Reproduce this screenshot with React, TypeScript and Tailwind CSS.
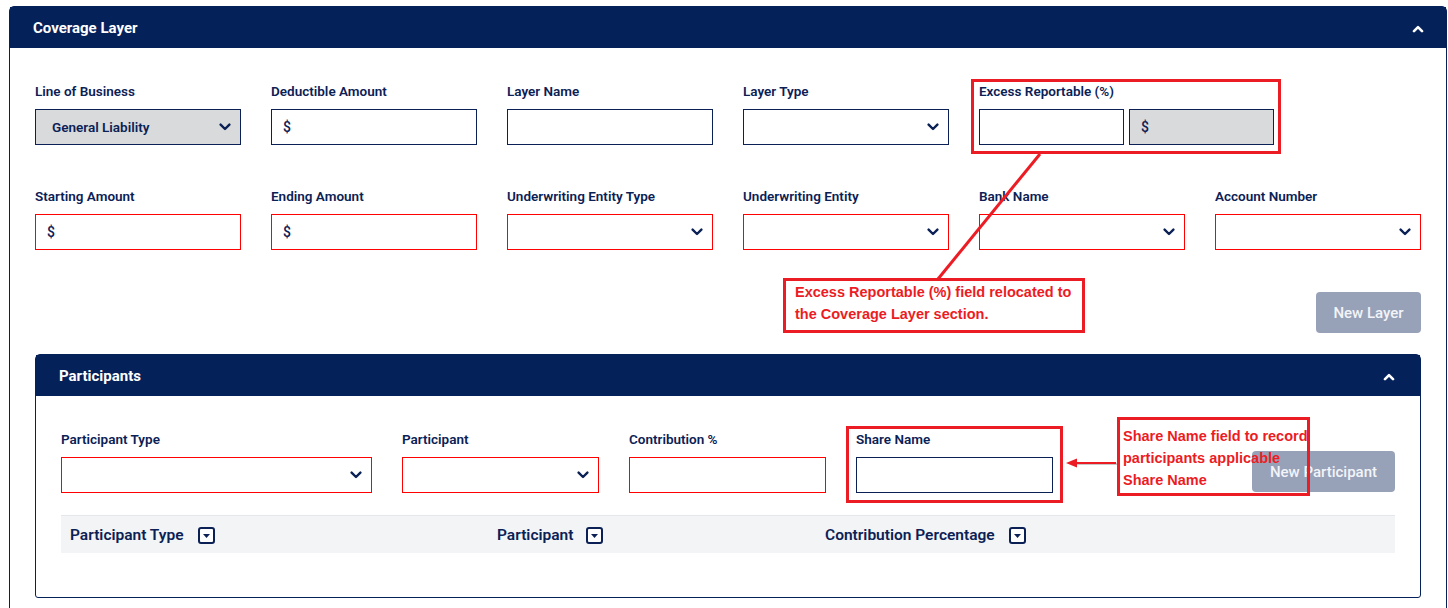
import React from 'react';

function ChevronUp() {
  return (
    <svg width="12" height="8" viewBox="0 0 12 8">
      <path d="M2 6.2 6 2.2l4 4" fill="none" stroke="#ffffff" strokeWidth="2.6" strokeLinecap="round" strokeLinejoin="round" />
    </svg>
  );
}

function ChevronDown() {
  return (
    <svg width="12" height="8" viewBox="0 0 12 8" className="absolute right-[9px] top-1/2 -translate-y-1/2">
      <path d="M1.6 1.6 6 6l4.4-4.4" fill="none" stroke="#0b2155" strokeWidth="2.4" strokeLinecap="round" strokeLinejoin="round" />
    </svg>
  );
}

function FilterIcon() {
  return (
    <svg width="17" height="17" viewBox="0 0 17 17" className="shrink-0">
      <rect x="1" y="1" width="15" height="15" rx="2" fill="#ffffff" stroke="#0b2155" strokeWidth="2" />
      <path d="M5 7h7l-3.5 4z" fill="#0b2155" />
    </svg>
  );
}

type FieldProps = {
  label: string;
  width: string;
  select?: boolean;
  red?: boolean;
  gray?: boolean;
  text?: string;
};

function Box({ width, select, red, gray, text }: Omit<FieldProps, 'label'>) {
  return (
    <div
      className={`relative flex h-[36px] items-center border ${width} ${red ? 'border-[#ff0000]' : 'border-[#0b2155]'} ${gray ? 'bg-[#d9dadc]' : 'bg-white'} ${select ? 'pl-[16px]' : 'pl-[11px]'}`}
    >
      {text && (
        <span className={`text-[#0b2155] ${select ? 'text-[13.5px] font-semibold' : 'text-[14px] font-medium'}`}>{text}</span>
      )}
      {select && <ChevronDown />}
    </div>
  );
}

function Field({ label, ...rest }: FieldProps) {
  return (
    <div className="flex flex-col">
      <label className="mb-[8px] h-[19px] text-[13.5px] font-semibold leading-[19px] text-[#0b2155]">{label}</label>
      <Box {...rest} />
    </div>
  );
}

export default function App() {
  return (
    <div className="relative min-h-[608px] overflow-hidden bg-white pl-[9px] pr-[1px] pt-[6px] font-['Roboto',sans-serif]">
      <div className="rounded-t-[5px] border border-[#05215a]">
        <div className="flex h-[41px] items-center justify-between bg-[#05215a] pl-[23px] pr-[22px] pt-[2px]">
          <h2 className="text-[15px] font-bold text-white">Coverage Layer</h2>
          <ChevronUp />
        </div>

        <div className="px-[25px] pb-[20px] pt-[34px]">
          <div className="flex gap-[30px]">
            <Field label="Line of Business" width="w-[206px]" select gray text="General Liability" />
            <Field label="Deductible Amount" width="w-[206px]" text="$" />
            <Field label="Layer Name" width="w-[206px]" />
            <Field label="Layer Type" width="w-[206px]" select />
            <div className="flex flex-col">
              <label className="mb-[8px] h-[19px] text-[13.5px] font-semibold leading-[19px] text-[#0b2155]">Excess Reportable (%)</label>
              <div className="flex gap-[5px]">
                <Box width="w-[145px]" />
                <Box width="w-[145px]" gray text="$" />
              </div>
            </div>
          </div>

          <div className="mt-[42px] flex gap-[30px]">
            <Field label="Starting Amount" width="w-[206px]" red text="$" />
            <Field label="Ending Amount" width="w-[206px]" red text="$" />
            <Field label="Underwriting Entity Type" width="w-[206px]" red select />
            <Field label="Underwriting Entity" width="w-[206px]" red select />
            <Field label="Bank Name" width="w-[206px]" red select />
            <Field label="Account Number" width="w-[206px]" red select />
          </div>

          <div className="mt-[42px] flex justify-end">
            <button className="h-[41px] w-[105px] rounded-[4px] bg-[#97a1b8] pt-[2px] text-[15px] font-medium text-[#f2f4f8]">New Layer</button>
          </div>

          <div className="mt-[21px] rounded-t-[5px] rounded-b-[3px] border border-[#05215a]">
            <div className="flex h-[41px] items-center justify-between bg-[#05215a] pl-[23px] pr-[25px] pt-[2px]">
              <h3 className="text-[15px] font-bold text-white">Participants</h3>
              <ChevronUp />
            </div>
            <div className="px-[25px] pb-[44px] pt-[34px]">
              <div className="flex items-end gap-[30px]">
                <Field label="Participant Type" width="w-[311px]" red select />
                <Field label="Participant" width="w-[197px]" red select />
                <Field label="Contribution %" width="w-[197px]" red />
                <Field label="Share Name" width="w-[197px]" />
                <button className="mb-[1px] ml-auto h-[41px] w-[143px] rounded-[4px] bg-[#97a1b8] pt-[2px] text-[15px] font-medium text-[#f2f4f8]">New Participant</button>
              </div>

              <div className="mt-[22px] flex h-[38px] items-center border-t border-[#e3e6ea] bg-[#f3f4f6] pt-[2px] text-[15.5px] font-semibold text-[#0b2155]">
                <div className="flex w-[427px] items-center gap-[14px] pl-[9px]">
                  <span>Participant Type</span>
                  <FilterIcon />
                </div>
                <div className="flex w-[328px] items-center gap-[13px] pl-[9px]">
                  <span>Participant</span>
                  <FilterIcon />
                </div>
                <div className="flex items-center gap-[14px] pl-[9px]">
                  <span>Contribution Percentage</span>
                  <FilterIcon />
                </div>
              </div>
            </div>
          </div>
        </div>
      </div>

      {/* annotations drawn over the form */}
      <svg className="pointer-events-none absolute left-0 top-0" width="1448" height="608">
        <line x1="1040" y1="154" x2="938" y2="279" stroke="#ec1c24" strokeWidth="3" />
        <line x1="1117" y1="464" x2="1076" y2="464" stroke="#c8c8c8" strokeWidth="2" />
        <line x1="1116" y1="463" x2="1074" y2="463" stroke="#ec1c24" strokeWidth="2" />
        <path d="M1066 463 1077 458.5 1077 467.5z" fill="#ec1c24" />
      </svg>
      <div className="pointer-events-none absolute left-[971px] top-[79px] h-[75px] w-[310px] border-[3px] border-[#ec1c24]" />
      <div className="pointer-events-none absolute left-[846px] top-[426px] h-[77px] w-[217px] border-[3px] border-[#ec1c24]" />
      <div className="absolute left-[783px] top-[278px] h-[55px] w-[302px] border-[3px] border-[#ec1c24] pl-[9px] font-['Liberation_Sans',Arial,sans-serif] text-[14.5px] font-bold leading-[22px] text-[#ec1c24]">
        Excess Reportable (%) field relocated to
        <br />
        the Coverage Layer section.
      </div>
      <div className="absolute left-[1117px] top-[417px] h-[79px] w-[193px] whitespace-nowrap border-[3px] border-[#ec1c24] pl-[3px] pt-[5px] font-['Liberation_Sans',Arial,sans-serif] text-[14.5px] font-bold leading-[22px] text-[#ec1c24]">
        Share Name field to record
        <br />
        participants applicable
        <br />
        Share Name
      </div>
    </div>
  );
}
